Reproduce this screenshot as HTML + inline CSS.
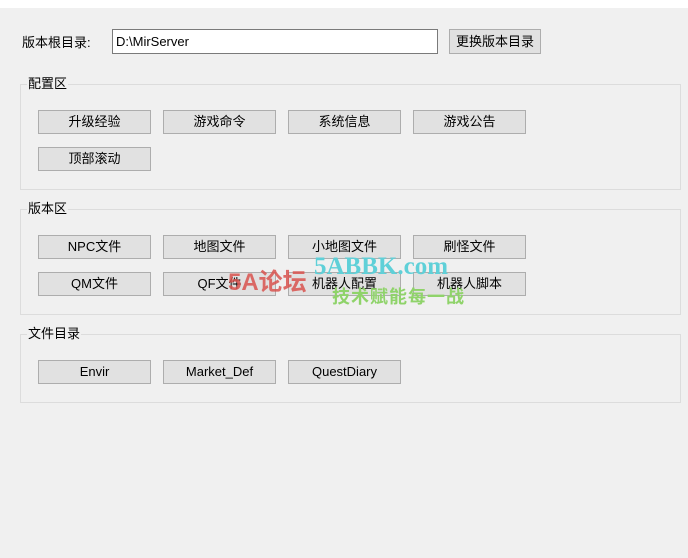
<!DOCTYPE html>
<html><head><meta charset="utf-8"><style>
body{margin:0;width:688px;height:558px;background:#f0f0f0;position:relative;overflow:hidden;font-family:"Liberation Sans","Noto Sans CJK SC",sans-serif;font-size:13px;color:#000}
.top{position:absolute;left:0;top:0;width:688px;height:8px;background:#fff}
.a{position:absolute}
.btn{position:absolute;width:111px;height:22px;background:#e1e1e1;border:1px solid #adadad;text-align:center;line-height:22px;font-size:13px}
.grp{position:absolute;left:20px;width:659px;border:1px solid #dcdcdc}
.gt{position:absolute;left:27px;background:#f0f0f0;padding:0 1px;font-size:13px;line-height:16px}
</style></head><body>
<div class="top"></div>
<div class="a" style="left:22px;top:32px">版本根目录:</div>
<div class="a" style="left:112px;top:29px;width:321px;height:23px;background:#fff;border:1px solid #7a7a7a;line-height:23px;padding-left:3px;font-size:13px">D:\MirServer</div>
<div class="btn" style="left:449px;top:29px;width:90px;height:23px;line-height:23px">更换版本目录</div>

<div class="grp" style="top:84px;height:104px"></div>
<div class="gt" style="top:76px">配置区</div>
<div class="btn" style="left:38px;top:110px">升级经验</div>
<div class="btn" style="left:163px;top:110px">游戏命令</div>
<div class="btn" style="left:288px;top:110px">系统信息</div>
<div class="btn" style="left:413px;top:110px">游戏公告</div>
<div class="btn" style="left:38px;top:147px">顶部滚动</div>

<div class="grp" style="top:209px;height:104px"></div>
<div class="gt" style="top:201px">版本区</div>
<div class="btn" style="left:38px;top:235px">NPC文件</div>
<div class="btn" style="left:163px;top:235px">地图文件</div>
<div class="btn" style="left:288px;top:235px">小地图文件</div>
<div class="btn" style="left:413px;top:235px">刷怪文件</div>
<div class="btn" style="left:38px;top:272px">QM文件</div>
<div class="btn" style="left:163px;top:272px">QF文件</div>
<div class="btn" style="left:288px;top:272px">机器人配置</div>
<div class="btn" style="left:413px;top:272px">机器人脚本</div>

<div class="grp" style="top:334px;height:67px"></div>
<div class="gt" style="top:326px">文件目录</div>
<div class="btn" style="left:38px;top:360px">Envir</div>
<div class="btn" style="left:163px;top:360px">Market_Def</div>
<div class="btn" style="left:288px;top:360px">QuestDiary</div>

<div class="a" style="left:228px;top:262px;font-size:24px;font-weight:bold;color:#d9534f;opacity:.85">5A论坛</div>
<div class="a" style="left:314px;top:253px;font-size:25px;font-weight:bold;color:#5fd0d8;font-family:'Liberation Serif',serif">5ABBK.com</div>
<div class="a" style="left:332px;top:283px;font-size:18px;font-weight:bold;color:#8fd36a;letter-spacing:1px">技术赋能每一战</div>
</body></html>
